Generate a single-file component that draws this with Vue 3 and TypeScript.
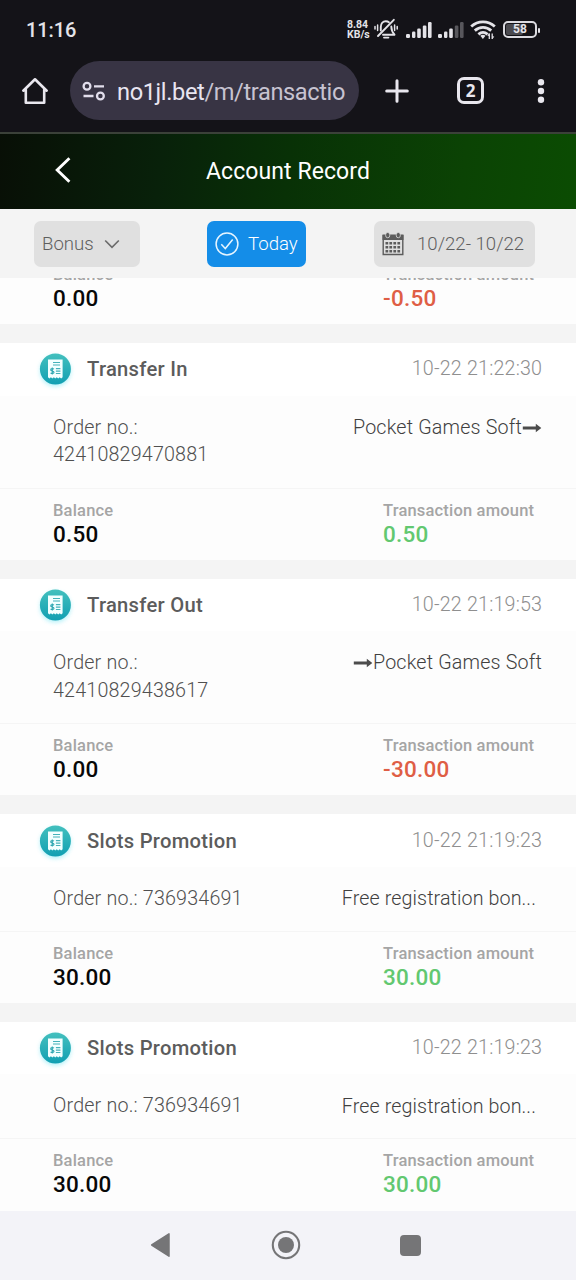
<script setup lang="ts">
interface Entry {
  title: string
  time: string
  order: string
  wrapped: boolean
  detail: string
  arrow: 'before' | 'after' | 'none'
  balance: string
  amount: string
}

const entries: Entry[] = [
  { title: 'Transfer In', time: '10-22 21:22:30', order: '42410829470881', wrapped: true, detail: 'Pocket Games Soft', arrow: 'after', balance: '0.50', amount: '0.50' },
  { title: 'Transfer Out', time: '10-22 21:19:53', order: '42410829438617', wrapped: true, detail: 'Pocket Games Soft', arrow: 'before', balance: '0.00', amount: '-30.00' },
  { title: 'Slots Promotion', time: '10-22 21:19:23', order: '736934691', wrapped: false, detail: 'Free registration bon...', arrow: 'none', balance: '30.00', amount: '30.00' },
  { title: 'Slots Promotion', time: '10-22 21:19:23', order: '736934691', wrapped: false, detail: 'Free registration bon...', arrow: 'none', balance: '30.00', amount: '30.00' },
]

const isNegative = (v: string): boolean => v.startsWith('-')
</script>

<template>
  <div class="screen">
    <div class="status">
      <span class="clock">11:16</span>
      <div class="speed"><span>8.84</span><span>KB/s</span></div>
      <svg class="bell" width="24" height="22" viewBox="0 0 24 22" fill="none" stroke="#e4e3e8" stroke-width="1.900" stroke-linecap="round" stroke-linejoin="round">
        <path d="M6.800 12.500V9c0-3.500 2-5.700 5-5.700 1.300 0 2.300.3 3.100 1M17.300 8.500c0 4 .6 5.400 3.200 8.200H9" />
        <path d="M19.800 1.800 4 18" />
        <path d="M10 19.600h4.400" />
        <path d="M3.600 7v5.400M1 8.500v2.400M20.600 7v5.400M23.200 8.500v2.400" stroke-width="1.500" />
      </svg>
      <svg class="signal" width="26" height="18" viewBox="0 0 26 18" fill="#e4e3e8">
        <rect x="0" y="13" width="4" height="4" rx="1.200" /><rect x="6" y="10.500" width="3.400" height="6.500" rx="1.200" /><rect x="11.200" y="7.500" width="3.600" height="9.500" rx="1.200" /><rect x="16.800" y="4.500" width="3.600" height="12.500" rx="1.200" /><rect x="22" y="1" width="3.600" height="16" rx="1.200" />
      </svg>
      <svg class="signal second" width="26" height="18" viewBox="0 0 26 18" fill="#e4e3e8">
        <rect x="0" y="13" width="4" height="4" rx="1.200" /><rect x="6" y="10.500" width="3.400" height="6.500" rx="1.200" /><rect x="11.200" y="7.500" width="3.600" height="9.500" rx="1.200" /><rect x="16.800" y="4.500" width="3.600" height="12.500" rx="1.200" fill="#58575c" /><rect x="22" y="1" width="3.600" height="16" rx="1.200" fill="#58575c" />
      </svg>
      <svg class="wifi" width="26" height="20" viewBox="0 0 26 20" fill="none" stroke="#e4e3e8" stroke-width="2.800">
        <path d="M1.200 6.500c6.800-6.300 16.800-6.300 23.600 0" />
        <path d="M4.800 10.600c4.800-4.400 11.600-4.400 16.400 0" />
        <path d="M8.400 14.400c2.800-2.500 6.400-2.500 9.200 0" />
        <path d="M10.300 15.800a4 4 0 0 1 5.200 0L12.900 19Z" fill="#e4e3e8" stroke="none" />
        <path d="M19.300 19v-5.500M22.200 13.500V19" stroke-width="1.300" />
        <path d="m17.300 15.800 2-2.800v3zM24.300 16.500l-2 2.800v-3z" fill="#e4e3e8" stroke="none" />
      </svg>
      <div class="battery"><i /><span>58</span></div>
      <span class="nub" />
    </div>

    <div class="browser">
      <svg class="home" width="28" height="28" viewBox="0 0 28 28" fill="none" stroke="#e9e7ee" stroke-width="2.600" stroke-linejoin="round" stroke-linecap="round">
        <path d="M2.300 13.700 14 2.300l11.700 11.400M4.800 12.500v13.200h18.400V12.500" />
      </svg>
      <div class="address">
        <svg width="24" height="20" viewBox="0 0 24 20" fill="none" stroke="#e2deec" stroke-width="2.300">
          <circle cx="5" cy="5.300" r="3.400" /><path d="M12 5.300h10M1.500 15h10" /><circle cx="18.400" cy="15" r="3.400" />
        </svg>
        <span class="url"><b>no1jl.bet</b>/m/transactio</span>
      </div>
      <svg class="plus" width="24" height="24" viewBox="0 0 24 24" stroke="#e9e7ee" stroke-width="3" stroke-linecap="round"><path d="M12 1.700v20.600M1.700 12h20.600" /></svg>
      <div class="tabs">2</div>
      <svg class="dots" width="8" height="26" viewBox="0 0 8 26" fill="#e9e7ee"><circle cx="4" cy="4.200" r="3.200" /><circle cx="4" cy="13" r="3.200" /><circle cx="4" cy="21.800" r="3.200" /></svg>
    </div>

    <header class="title-bar">
      <svg width="18" height="28" viewBox="0 0 18 28" fill="none" stroke="#fff" stroke-width="2.900"><path d="M15.400 2.300 3.200 14l12.200 11.700" /></svg>
      <h1>Account Record</h1>
    </header>

    <div class="filters">
      <button class="type">Bonus
        <svg width="16" height="10" viewBox="0 0 16 10" fill="none" stroke="#6c6c6c" stroke-width="1.700"><path d="m1.200 1.500 6.800 6.800 6.800-6.800" /></svg>
      </button>
      <button class="today">
        <svg width="24" height="24" viewBox="0 0 24 24" fill="none" stroke="#e6f5ff" stroke-width="1.500"><circle cx="12" cy="12" r="10.900" /><path d="m6.300 12.300 4 4.200 7.400-9" /></svg>
        Today
      </button>
      <button class="range">
        <svg width="22" height="24" viewBox="0 0 22 24">
          <path d="M1.200 3.200h19.600v19.300H1.200z" fill="none" stroke="#5c5c5c" stroke-width="1.400" />
          <path d="M.5 3h21v5H.5z" fill="#5c5c5c" />
          <g fill="#5c5c5c" stroke="#e0e0e0" stroke-width=".8"><rect x="3.700" y=".5" width="4" height="5.200" rx="1.900" /><rect x="14.300" y=".5" width="4" height="5.200" rx="1.900" /></g>
          <g fill="#5c5c5c"><path v-for="r in 3" :key="r" :d="`M7.400 ${6 + r * 4}h2.700v2.500H7.400zM11.400 ${6 + r * 4}h2.700v2.500h-2.700zM15.400 ${6 + r * 4}h2.700v2.500h-2.700zM3.500 ${6 + r * 4}h2.700v2.500H3.500z`" /></g>
        </svg>
        10/22- 10/22
      </button>
    </div>

    <main class="list">
      <section class="card clipped">
        <div class="foot">
          <div class="col"><small>Balance</small><strong>0.00</strong></div>
          <div class="col"><small>Transaction amount</small><strong class="minus">-0.50</strong></div>
        </div>
      </section>
      <section v-for="(e, i) in entries" :key="i" class="card">
        <div class="head">
          <svg class="badge" width="40" height="42" viewBox="0 0 40 42">
            <defs>
              <linearGradient :id="`teal${i}`" x1="0" y1="0" x2="0" y2="1"><stop offset="0" stop-color="#43c0be" /><stop offset="1" stop-color="#129fb2" /></linearGradient>
            </defs>
            <circle class="glow" cx="20.400" cy="23" r="15.500" />
            <circle cx="20.400" cy="21" r="15.500" :fill="`url(#teal${i})`" />
            <path d="M13 11.500h14.600v17.800l-1.460 1.300-1.460-1.300-1.460 1.300-1.460-1.300-1.460 1.300-1.460-1.300-1.460 1.300-1.460-1.300-1.460 1.300-1.460-1.300z" fill="#f3ffff" />
            <path d="M18 14.500h7M18 17h7M20.900 20.700h4.500M20.900 23.100h4.500M20.900 25.500h4.500" stroke="#45b2ba" stroke-width="1.200" />
            <path d="M18.900 21.200c-.8-.9-3.200-.8-3.200.7 0 1.600 3.300.9 3.300 2.400 0 1.500-2.500 1.600-3.400.6M17.300 19.500v7" stroke="#2fa7b2" stroke-width="1.100" fill="none" />
          </svg>
          <h2>{{ e.title }}</h2>
          <time>{{ e.time }}</time>
        </div>
        <div class="body">
          <div class="order">Order no.:<br v-if="e.wrapped">{{ e.wrapped ? '' : ' ' }}{{ e.order }}</div>
          <div class="detail" :class="{ short: e.arrow === 'none' }">
            <svg v-if="e.arrow === 'before'" width="20" height="12" viewBox="0 0 20 12" fill="#4c4c4c"><path d="M.8 4.600h13V1.700L19.300 6l-5.500 4.300V7.400H.8z" /></svg>
            <span>{{ e.detail }}</span>
            <svg v-if="e.arrow === 'after'" width="20" height="12" viewBox="0 0 20 12" fill="#4c4c4c"><path d="M.8 4.600h13V1.700L19.300 6l-5.500 4.300V7.400H.8z" /></svg>
          </div>
        </div>
        <div class="foot">
          <div class="col"><small>Balance</small><strong>{{ e.balance }}</strong></div>
          <div class="col"><small>Transaction amount</small><strong :class="isNegative(e.amount) ? 'minus' : 'plus-value'">{{ e.amount }}</strong></div>
        </div>
      </section>
    </main>

    <nav class="system">
      <svg width="22" height="26" viewBox="0 0 22 26"><path d="M20 1.800v22.400L2.700 13z" fill="#757577" stroke="#757577" stroke-width="1.500" stroke-linejoin="round" /></svg>
      <svg width="30" height="30" viewBox="0 0 30 30"><circle cx="15" cy="15" r="13.200" fill="none" stroke="#757577" stroke-width="2.100" /><circle cx="15" cy="15" r="8" fill="#757577" /></svg>
      <span />
    </nav>
  </div>
</template>

<style>
body { margin: 0; }
</style>

<style scoped>
.screen { width: 576px; height: 1280px; overflow: hidden; display: flex; flex-direction: column; background: #f4f4f4; font-family: Roboto, "Liberation Sans", sans-serif; box-sizing: border-box; }
.screen * { box-sizing: border-box; }
.status { height: 60px; flex: none; display: flex; align-items: center; background: #141318; color: #e4e3e8; padding-left: 26px; }
.clock { width: 320px; font-size: 20px; font-weight: 500; letter-spacing: -.1px; }
.speed { width: 28px; padding-left: 1px; display: flex; flex-direction: column; font-size: 10.500px; line-height: 10px; font-weight: 700; }
.bell { margin-top: -2px; }
.signal { margin-left: 8px; }
.signal.second { margin-left: 6px; }
.wifi { margin-left: 6px; }
.battery { width: 34px; height: 17px; margin: -1px 0 0 7px; border: 2px solid #dcdbe0; border-radius: 5px; padding: 1px; display: grid; align-items: center; }
.battery i { grid-area: 1 / 1; width: 17px; height: 11px; background: #4b4a4f; border-radius: 2px; }
.battery span { grid-area: 1 / 1; text-align: center; font-size: 12px; line-height: 11px; font-weight: 700; }
.nub { width: 2px; height: 5px; margin-left: 1px; background: #e4e3e8; border-radius: 1px; }
.browser { height: 74px; flex: none; display: flex; align-items: center; padding: 0 0 11px 21px; border-bottom: 2px solid #3b4139; background: #141318; }
.address { width: 289px; height: 59px; margin-left: 21px; border-radius: 30px; background: #383444; display: flex; align-items: center; padding-left: 12px; }
.url { margin: 2px 0 0 11px; font-size: 23.600px; letter-spacing: -.38px; color: #c7c3d1; white-space: nowrap; }
.url b { font-weight: 400; color: #e8e5f1; }
.plus { margin-left: 26px; }
.tabs { width: 27px; height: 27px; margin-left: 48px; border: 3px solid #e9e7ee; border-radius: 7px; color: #e9e7ee; font: 700 17px/21px "Open Sans", sans-serif; text-align: center; }
.dots { margin-left: 53px; }
.title-bar { height: 75px; flex: none; display: grid; grid-template-columns: 72px 1fr 72px; align-items: center; background: linear-gradient(97deg, #080f06 0%, #08210a 28%, #083106 50%, #0b4304 80%, #0b4c02 100%); }
.title-bar svg { justify-self: end; margin-bottom: 3px; }
h1 { margin: 0; grid-column: 2; text-align: center; color: #fff; font-size: 23px; font-weight: 400; letter-spacing: .08px; }
.filters { height: 69px; flex: none; display: flex; align-items: center; padding-left: 34px; background: #f4f4f4; }
button { border: 0; border-radius: 7px; height: 46px; padding: 0; display: flex; align-items: center; background: #e0e0e0; color: #5e5e5e; font: 300 18.600px/46px Roboto, sans-serif; white-space: nowrap; }
.type { width: 106px; padding-left: 8px; gap: 10px; }
.today { width: 99px; margin-left: 67px; padding-left: 8px; gap: 9px; background: #148de8; color: #fff; }
.range { width: 161px; margin-left: 68px; padding-left: 8px; gap: 13px; }
.list { height: 933px; flex: none; overflow: hidden; }
.card { margin-bottom: 18.800px; background: #fdfdfd; }
.clipped { margin-top: -26px; }
.head { height: 52.500px; display: flex; align-items: center; background: #fff; padding: 0 34px 0 35px; }
.badge { flex: none; overflow: visible; }
.glow { fill: #8deaf5; opacity: .65; filter: blur(2px); }
h2 { margin: 0 0 0 12px; flex: 1; color: #5c5c5c; font-size: 20.200px; font-weight: 500; letter-spacing: .28px; }
time { color: #8f8f8f; font-size: 19.700px; font-weight: 300; letter-spacing: .18px; margin-right: -.2px; padding-bottom: 1px; }
.body { display: flex; justify-content: space-between; padding: 18px 34px 18px 53px; color: #505050; font-size: 19.700px; line-height: 27.700px; letter-spacing: .18px; font-weight: 300; }
.order { white-space: pre; }
.card:nth-child(-n+3) .body { padding-bottom: 18.600px; }
.detail { height: 28px; display: flex; align-items: center; color: #404040; }
.detail.short { padding-right: 6px; letter-spacing: .1px; }
.foot { height: 72.300px; display: flex; border-top: 1px solid #f5f5f5; padding: 11px 0 0 53px; }
.col { width: 330px; flex: none; display: flex; flex-direction: column; }
small { color: #a5a5a5; font-size: 16.500px; line-height: 22px; font-weight: 500; letter-spacing: .18px; }
strong { color: #080808; font-size: 22.500px; line-height: 25px; font-weight: 500; letter-spacing: .25px; }
.minus { color: #df5e45; }
.plus-value { color: #62c870; }
.system { height: 69px; flex: none; display: flex; align-items: center; background: #f3f3f8; padding: 0 0 1px 149px; }
.system svg:nth-child(2) { margin-left: 100px; }
.system span { width: 21px; height: 21px; border-radius: 4px; margin-left: 99px; background: #757577; }
</style>
